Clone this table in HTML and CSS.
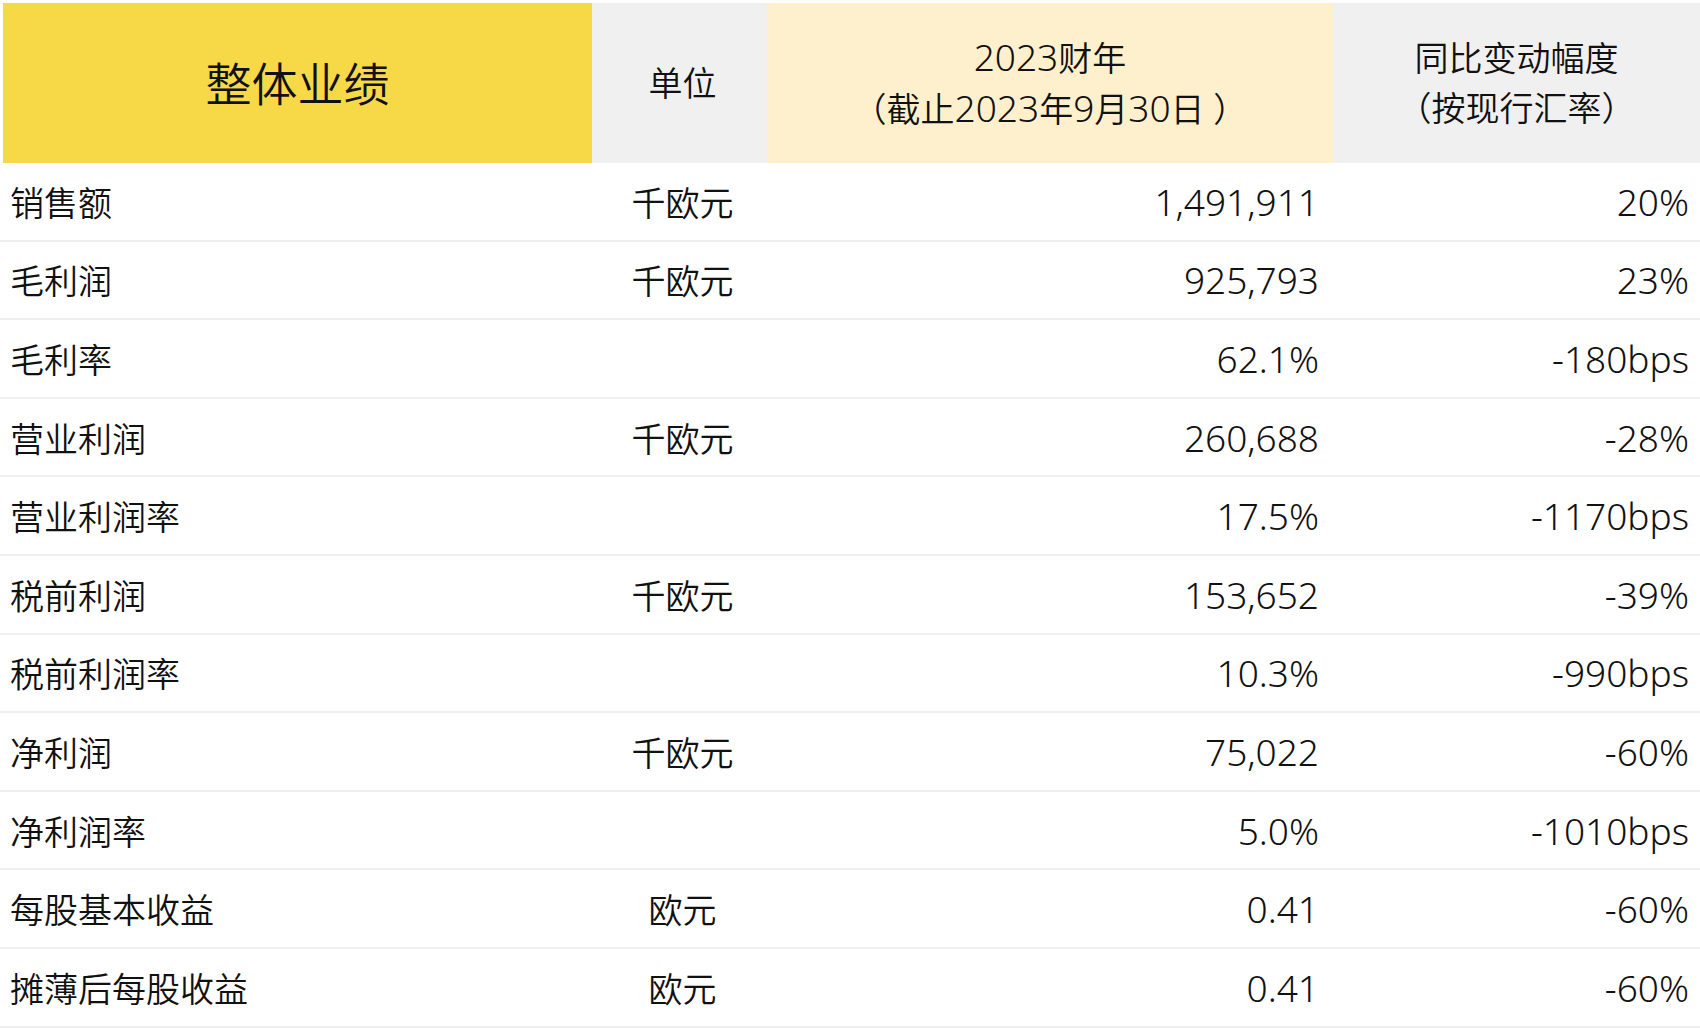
FILE: index.html
```html
<!DOCTYPE html>
<html lang="zh-CN">
<head>
<meta charset="utf-8">
<title>整体业绩</title>
<link rel="stylesheet" href="styles.css">
</head>
<body>
<div class="sheet">
  <div class="row head">
    <div class="h-title">整体业绩</div>
    <div class="h-unit">单位</div>
    <div class="h-year"><span><span class="num">2023</span>财年<br>（截止<span class="num">2023</span>年<span class="num">9</span>月<span class="num">30</span>日 ）</span></div>
    <div class="h-chg"><span>同比变动幅度<br>（按现行汇率）</span></div>
  </div>
  <div class="row body"><div class="c-name">销售额</div><div class="c-unit">千欧元</div><div class="c-val">1,491,911</div><div class="c-chg">20%</div></div>
  <div class="row body"><div class="c-name">毛利润</div><div class="c-unit">千欧元</div><div class="c-val">925,793</div><div class="c-chg">23%</div></div>
  <div class="row body"><div class="c-name">毛利率</div><div class="c-unit"></div><div class="c-val">62.1%</div><div class="c-chg">-180bps</div></div>
  <div class="row body"><div class="c-name">营业利润</div><div class="c-unit">千欧元</div><div class="c-val">260,688</div><div class="c-chg">-28%</div></div>
  <div class="row body"><div class="c-name">营业利润率</div><div class="c-unit"></div><div class="c-val">17.5%</div><div class="c-chg">-1170bps</div></div>
  <div class="row body"><div class="c-name">税前利润</div><div class="c-unit">千欧元</div><div class="c-val">153,652</div><div class="c-chg">-39%</div></div>
  <div class="row body"><div class="c-name">税前利润率</div><div class="c-unit"></div><div class="c-val">10.3%</div><div class="c-chg">-990bps</div></div>
  <div class="row body"><div class="c-name">净利润</div><div class="c-unit">千欧元</div><div class="c-val">75,022</div><div class="c-chg">-60%</div></div>
  <div class="row body"><div class="c-name">净利润率</div><div class="c-unit"></div><div class="c-val">5.0%</div><div class="c-chg">-1010bps</div></div>
  <div class="row body"><div class="c-name">每股基本收益</div><div class="c-unit">欧元</div><div class="c-val">0.41</div><div class="c-chg">-60%</div></div>
  <div class="row body"><div class="c-name">摊薄后每股收益</div><div class="c-unit">欧元</div><div class="c-val">0.41</div><div class="c-chg">-60%</div></div>
</div>
</body>
</html>
```
FILE: styles.css
```css
html, body {
  margin: 0;
  padding: 0;
  background: #ffffff;
}
.sheet {
  width: 1700px;
  font-family: "Noto Sans", "Noto Sans CJK SC", sans-serif;
  color: #111111;
  font-weight: 350;
}
.row {
  display: grid;
  grid-template-columns: 592px 175px 566px 367px;
}
.head {
  padding-top: 3px;
  height: 163px;
  box-sizing: border-box;
}
.head > div {
  display: flex;
  align-items: center;
  justify-content: center;
  text-align: center;
  font-size: 34px;
  line-height: 50px;
}
.h-title {
  background: #f7d948;
  margin-left: 3px;
  font-size: 46px !important;
}
.h-unit {
  background: #f0f0f0;
  padding-left: 6px;
}
.h-year {
  background: #fef0cc;
}
.h-chg {
  background: #f0f0f0;
}
.num {
  font-size: 37px;
}
.body {
  height: 78.6px;
  box-sizing: border-box;
  border-bottom: 2px solid #f0f0f0;
  align-items: center;
}
.c-name {
  font-size: 34px;
  padding-left: 10px;
}
.c-unit {
  font-size: 34px;
  text-align: center;
  padding-left: 6px;
}
.c-val {
  font-size: 37px;
  text-align: right;
  padding-right: 14px;
}
.c-chg {
  font-size: 37px;
  text-align: right;
  padding-right: 11px;
}
```
